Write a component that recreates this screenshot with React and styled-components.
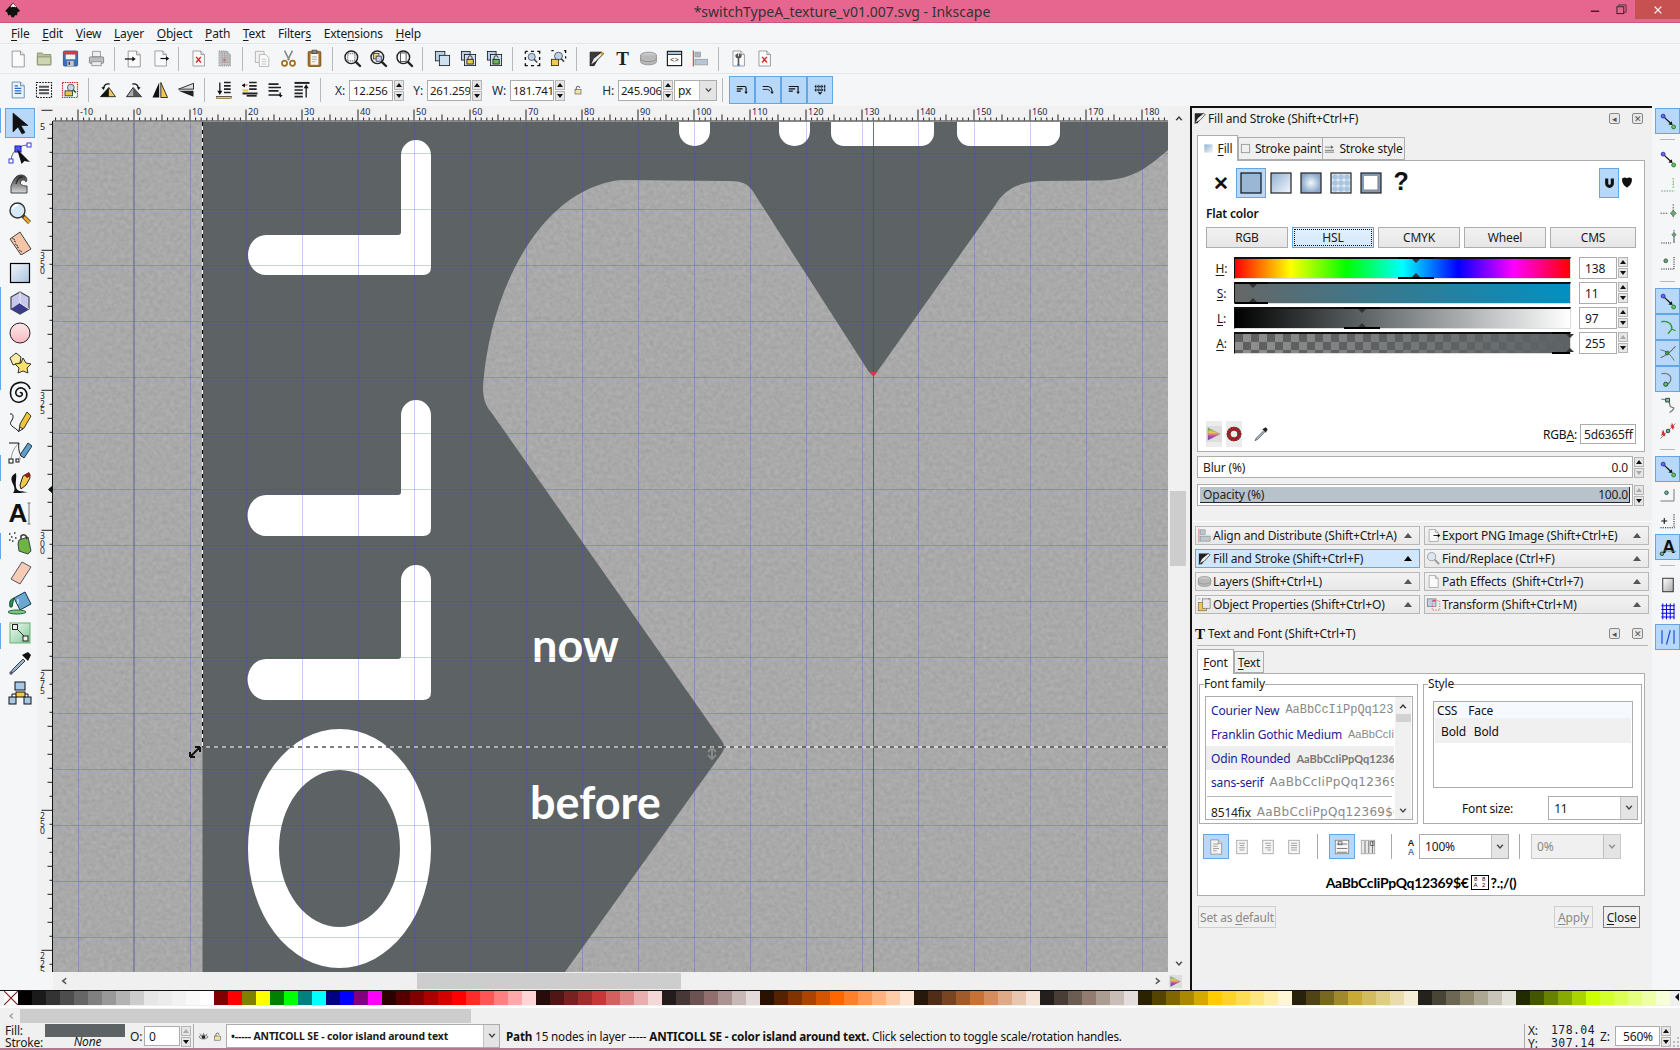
import React from "react";
import styled, { createGlobalStyle } from "styled-components";

const Global = createGlobalStyle`
  html, body { margin: 0; padding: 0; background: #f0f0f0; }
  body { font-family: "Noto Sans", "Open Sans", sans-serif; font-size: 12px; color: #111; letter-spacing: -0.17px; }
  * { box-sizing: border-box; }
  u { text-underline-offset: 2px; }
`;

const Page = styled.div`
  width: 1680px; height: 1050px; overflow: hidden; position: relative;
  display: flex; flex-direction: column; background: #f4f6f8;
`;
const Defs = styled.svg`position: absolute; width: 0; height: 0;`;
const IconSvg = styled.svg`
  width: ${p => p.$s}px; height: ${p => p.$s}px; flex: none; display: block;
  opacity: ${p => p.$dim ? 0.55 : 1}; letter-spacing: 0;
`;

/* ---------- title + menus ---------- */
const TitleBar = styled.header`
  height: 23px; flex: none; background: #e7668f; border-bottom: 1px solid #c9577e; position: relative;
  display: flex; align-items: center; justify-content: center;
  font-size: 14px; color: #333; padding-left: 4px; letter-spacing: 0;
`;
const AppLogo = styled.div`position: absolute; left: 4px; top: 2px;`;
const WinButtons = styled.div`position: absolute; right: 0; top: 0; display: flex; align-items: flex-start;`;
const WinBtn = styled.div`
  width: ${p => p.$w}px; height: 19px; display: flex; align-items: center; justify-content: center;
  background: ${p => p.$close ? "#c75050" : "transparent"};
`;
const MenuBar = styled.nav`
  height: 21px; flex: none; display: flex; gap: 12.7px; align-items: center; padding-left: 11px;
  border-bottom: 1px solid #e6e6e8; font-size: 12px; color: #1a1a1a;
`;
const Toolbar = styled.div`
  height: ${p => p.$h}px; flex: none; display: flex; align-items: center; padding-left: 5px;
  border-bottom: ${p => p.$line ? "1px solid #e6e6e8" : "none"};
`;
const Slot = styled.div`
  width: 26px; height: ${p => p.$on ? 28 : 26}px; flex: none; display: flex; align-items: center; justify-content: center;
  background: ${p => p.$on ? "#b7d8f8" : "transparent"};
  border: ${p => p.$on ? "1px solid #63a6e6" : "none"};
`;
const Sep = styled.div`
  width: 12px; height: 24px; flex: none; position: relative;
  &::after { content: ""; position: absolute; left: 5px; top: 0; bottom: 0; width: 1px; background: #b9b9b9; }
`;
const FieldLabel = styled.span`
  color: #1c2c44; font-size: 12px; width: ${p => p.$w}px; flex: none; text-align: right; padding-right: 4px;
`;
const Entry = styled.div`
  width: ${p => p.$w}px; height: ${p => p.$h || 21}px; flex: none; background: #fff;
  border: 1px solid ${p => p.$dim ? "#ccc" : "#acacac"}; display: flex; align-items: center; padding-left: ${p => p.$pl ?? 3}px;
  font-size: ${p => p.$fs || 12}px; color: ${p => p.$dim ? "#888" : "#1a1a1a"}; white-space: nowrap; overflow: hidden;
  justify-content: ${p => p.$end ? "flex-end" : "flex-start"};
`;
const SpinBox = styled.div`
  width: 10px; flex: none; margin-left: 1px; display: flex; flex-direction: column; gap: 1px;
`;
const SpinBtn = styled.div`
  height: 10px; background: #e6e6e6; border: 1px solid #b4b4b4; display: flex; align-items: center; justify-content: center;
  &::after {
    content: ""; border-left: 3px solid transparent; border-right: 3px solid transparent;
    ${p => p.$down ? "border-top" : "border-bottom"}: 4px solid ${p => p.$dim ? "#aaa" : "#111"};
  }
`;
const Combo = styled.div`
  width: ${p => p.$w}px; height: ${p => p.$h || 21}px; flex: none; display: flex; background: ${p => p.$dim ? "#f0f0f0" : "#fff"};
  border: 1px solid ${p => p.$dim ? "#c8c8c8" : "#acacac"}; font-size: 12px; color: ${p => p.$dim ? "#888" : "#1a1a1a"};
  margin-left: ${p => p.$ml || 0}px;
`;
const ComboText = styled.div`
  flex: 1; display: flex; align-items: center; padding-left: ${p => p.$pl ?? 4}px; white-space: nowrap; overflow: hidden;
`;
const ComboArrow = styled.div`
  width: ${p => p.$w || 17}px; flex: none; display: flex; align-items: center; justify-content: center;
  background: #e4e4e4; border-left: 1px solid #c0c0c0;
`;

/* ---------- workspace ---------- */
const Main = styled.main`flex: 1; min-height: 0; display: flex;`;
const Toolbox = styled.aside`
  width: 37px; flex: none; padding: 2px 0 0 5px; position: relative; display: flex; flex-direction: column;
`;
const Mark = styled.i`
  position: absolute; left: 0; width: 1px; top: ${p => p.$t}px; height: ${p => p.$h}px; background: #62a8e8;
`;
const ToolSlot = styled.div`
  width: 30px; height: 30px; flex: none; display: flex; align-items: center; justify-content: center;
  background: ${p => p.$on ? "#b7d8f8" : "transparent"}; border: ${p => p.$on ? "1px solid #63a6e6" : "none"};
`;
const Work = styled.section`
  width: 1153px; flex: none; display: grid; grid-template-columns: 16px 1115px 22px; grid-template-rows: 16px 850px 18px;
  background: #f0f0f0;
`;
const RulerCell = styled.div`grid-column: 1; grid-row: 1 / 3;`;
const CanvasCell = styled.div`grid-column: 2; grid-row: 2;`;
const RulerH = styled.svg`display: block; background: #f1f1f1; letter-spacing: 0;`;
const CanvasSvg = styled.svg`display: block; letter-spacing: 0;`;
const VScroll = styled.div`
  grid-row: 1 / 3; grid-column: 3; background: #f0f0f0; display: flex; flex-direction: column; align-items: center; padding-top: 6px;
`;
const VThumb = styled.div`width: 16px; height: 75px; background: #cdcdcd; margin: 367px 2px 0 0;`;
const VEnd = styled.div`margin-top: auto; margin-bottom: 2px;`;
const HScroll = styled.div`
  grid-column: 2; display: flex; align-items: center; background: #f0f0f0; padding-left: 5px; position: relative;
`;
const HThumb = styled.div`width: 264px; height: 16px; background: #cdcdcd; margin-left: 347px;`;
const HEnd = styled.div`margin-left: auto; margin-right: 4px;`;
const CornerIcon = styled.div`display: flex; align-items: center; padding-left: 1px;`;
const CornerEmpty = styled.div`background: #f4f6f8;`;

/* ---------- dock panel ---------- */
const Dock = styled.section`
  width: 462px; flex: none; background: #f0f0f0; border-left: 2px solid #111; border-top: 2px solid #111;
  display: flex; flex-direction: column; padding-left: 5px;
`;
const PanelTitle = styled.div`
  height: ${p => p.$h}px; flex: none; display: flex; align-items: center; margin-left: -4px; padding-right: 9px;
  gap: 1px; font-size: 12px; color: #1a1a1a; margin-top: ${p => p.$mt || 0}px;
`;
const PanelName = styled.span`flex: 1; white-space: nowrap;`;
const MiniBtn = styled.div`
  width: 11px; height: 11px; margin-left: 11px; border: 1px solid #888; border-radius: 2px; background: #e8e8e8;
  display: flex; align-items: center; justify-content: center; font-size: 9px; line-height: 1; color: #555;
`;
const TabRow = styled.div`display: flex; align-items: flex-end; flex: none; height: ${p => p.$h}px; margin-top: ${p => p.$mt || 0}px; position: relative; z-index: 1;`;
const Tab = styled.div`
  width: ${p => p.$w}px; height: ${p => p.$on ? p.$h + 1 : p.$h - 2}px; display: flex; align-items: center; justify-content: center; gap: 4px;
  background: ${p => p.$on ? "#fff" : "#f0f0f0"}; border: 1px solid #adadad; white-space: nowrap; flex: none;
  border-bottom: ${p => p.$on ? "none" : "1px solid #adadad"}; margin-bottom: ${p => p.$on ? -1 : 0}px;
  margin-right: ${p => p.$on ? 0 : -1}px; font-size: 12px; color: #1a1a1a;
`;
const Note = styled.div`
  width: 448px; height: ${p => p.$h}px; flex: none; background: #fff; border: 1px solid #adadad; display: flex; flex-direction: column;
  padding: ${p => p.$pad};
`;
const ModeRow = styled.div`height: 30px; flex: none; margin-top: 7px; display: flex; align-items: center;`;
const ModeBtn = styled.div`
  width: 30px; height: 30px; flex: none; display: flex; align-items: center; justify-content: center;
  background: ${p => p.$on ? "#b7d8f8" : "transparent"}; border: ${p => p.$on ? "1px solid #63a6e6" : "none"};
`;
const Cross = styled.b`font-size: 19px; line-height: 1; font-family: "Liberation Sans", sans-serif; color: #111;`;
const Query = styled.b`font-size: 25px; line-height: 1; font-family: "Liberation Sans", sans-serif; color: #111; margin-top: -4px;`;
const MagnetWrap = styled.div`margin-left: auto; margin-right: 2px; display: flex; align-items: center; gap: 1px;`;
const Magnet = styled.div`
  width: 20px; height: 30px; background: #b7d8f8; border: 1px solid #63a6e6; display: flex; align-items: center; justify-content: center;
`;
const FlatLabel = styled.div`font-weight: 600; font-size: 12px; height: 16px; line-height: 16px; margin-top: 8px; color: #111;`;
const ModeTabs = styled.div`display: flex; gap: 4px; margin-top: 5px; flex: none;`;
const ModeTab = styled.div`
  width: ${p => p.$w}px; height: 21px; display: flex; align-items: center; justify-content: center; font-size: 12px; color: #1a1a1a;
  background: ${p => p.$on ? "linear-gradient(#e4f1fd,#d3e8fb)" : "linear-gradient(#f2f2f2,#e6e6e6)"};
  border: 1px solid ${p => p.$on ? "#63a6e6" : "#adadad"};
  outline: ${p => p.$on ? "1px dotted #111" : "none"}; outline-offset: -3px;
`;
const Sliders = styled.div`display: flex; flex-direction: column; gap: 4px; margin-top: 9px;`;
const SliderRow = styled.div`display: grid; grid-template-columns: 28px 337px 38px 10px; height: 21px; align-items: stretch;`;
const SliderLabel = styled.div`display: flex; align-items: center; justify-content: center; font-size: 12px; padding-left: 3px; color: #1a1a1a;`;
const Track = styled.div`
  position: relative; width: 337px; border-top: 2px solid #111; border-left: 1px solid #111; background: ${p => p.$bg};
  border-bottom: 1px solid #ddd; border-right: 1px solid #ddd;
`;
const Thumb = styled.div`
  position: absolute; top: -2px; bottom: -1px; border-top: 2px solid #000; border-bottom: 2px solid #000;
  &::before, &::after { content: ""; position: absolute; left: 14px; border-left: 4px solid transparent; border-right: 4px solid transparent; }
  &::before { top: 0; border-top: 4px solid #333; }
  &::after { bottom: 0; border-bottom: 4px solid #333; }
`;
const SliderEntry = styled(Entry)`margin-left: 8px; height: 22px;`;
const SliderSpin = styled.div`display: flex; flex: 1; margin-left: 8px;`;
const ColorTools = styled.div`margin-top: auto; height: 26px; margin-bottom: 4px; display: flex; align-items: center; gap: 4px;`;
const ColorTool = styled.div`
  width: 16px; height: 26px; flex: none; background: ${p => p.$bg ? "#ececec" : "transparent"}; display: flex; align-items: center; justify-content: center;
  margin-left: ${p => p.$ml || 0}px;
`;
const Rgba = styled.div`margin-left: auto; margin-right: 0; display: flex; align-items: center; gap: 3px; font-size: 12px;`;
const ValueRow = styled.div`display: flex; margin-top: ${p => p.$mt}px; flex: none; width: 448px; align-items: center;`;
const ValueBox = styled.div`
  width: 436px; height: 22px; background: #fff; border: 1px solid #adadad; padding: ${p => p.$fill ? "2px 2px" : "0"}; display: flex; font-size: 12px;
`;
const ValueFill = styled.div`
  flex: 1; display: flex; justify-content: space-between; align-items: center; padding: 0 ${p => p.$fill ? 1 : 4}px 0 ${p => p.$fill ? 3 : 5}px;
  background: ${p => p.$fill ? "#b7c2cb" : "transparent"}; border-bottom: ${p => p.$fill ? "1px solid #223" : "none"};
  border-right: ${p => p.$fill ? "1px solid #223" : "none"}; color: #222;
`;
const DockRule = styled.div`height: 1px; background: #fff; margin: 15px 0 4px -4px; flex: none;`;
const DockGrid = styled.div`display: grid; grid-template-columns: 225px 225px; column-gap: 4px; row-gap: 4px; margin-left: -2px; flex: none;`;
const DockBtn = styled.div`
  height: 19px; display: flex; align-items: center; background: ${p => p.$on ? "#cfe6fc" : "linear-gradient(#f3f3f3,#e8e8e8)"};
  border: 1px solid ${p => p.$on ? "#63a6e6" : "#b8b8b8"}; font-size: 12px; color: #1a1a1a; padding-left: 1px; gap: 1px;
`;
const DockName = styled.span`flex: 1; white-space: pre; overflow: hidden;`;
const DockArrow = styled.div`
  width: 14px; height: 100%; flex: none; display: flex; align-items: center; justify-content: center; margin-right: 4px;
  &::after { content: ""; border-left: 4px solid transparent; border-right: 4px solid transparent; border-bottom: 5px solid ${p => p.$on ? "#000" : "#555"}; }
`;
const TitleRule = styled.div`height: 1px; background: #b5b5b5; flex: none; margin-right: 4px;`;
const FrameRow = styled.div`display: flex; gap: 5px; margin-top: 2px; margin-left: 1px;`;
const Frame = styled.fieldset`
  width: 219px; height: 148px; margin: 0; border: 1px solid #adadad; padding: 0; min-width: 0; position: relative;
`;
const Legend = styled.legend`padding: 0; margin-left: 4px; font-size: 12px; line-height: 16px; color: #1a1a1a;`;
const FontList = styled.div`
  position: absolute; left: 5px; top: 4px; width: 208px; height: 124px; border: 1px solid #adadad; display: flex; overflow: hidden; background: #fff;
`;
const FontRows = styled.div`width: 188px; flex: none; padding-top: 1px; overflow: hidden;`;
const FontRow = styled.div`
  height: 24px; display: flex; align-items: center; gap: 6px; padding-left: 5px; white-space: nowrap; overflow: hidden;
  background: ${p => p.$on ? "#efefef" : "#fff"}; margin-top: ${p => p.$mt || 0}px; font-size: 12px;
  color: ${p => p.$plain ? "#222" : "#1c1c96"};
`;
const Preview = styled.span`
  color: ${p => p.$c || "#888"}; font-family: ${p => p.$f}, sans-serif; font-weight: ${p => p.$b ? 700 : 400}; font-size: ${p => p.$s || 12}px;
  letter-spacing: ${p => p.$ls || 0}px;
`;
const FontRule = styled.div`height: 1px; background: #b8b8b8; margin: 2px 2px 0 1px;`;
const ListScroll = styled.div`
  width: 16px; flex: none; margin-left: 1px; background: #f0f0f0; display: flex; flex-direction: column; align-items: center;
`;
const ListChev = styled.div`height: 16px; display: flex; align-items: center; justify-content: center; margin-top: ${p => p.$auto ? "auto" : "1px"};`;
const ListThumb = styled.div`width: 15px; height: 8px; background: #d2d2d2;`;
const StyleTree = styled.div`
  position: absolute; left: 9px; top: 9px; width: 200px; height: 87px; border: 1px solid #adadad; background: #fff;
`;
const TreeHead = styled.div`
  height: 17px; background: #f6f9fd; display: flex; align-items: center; padding-left: 3px; gap: 11px; border-bottom: 1px solid #eef3fa; font-size: 12px;
`;
const TreeRow = styled.div`height: 24px; background: #f0f0f0; display: flex; align-items: center; gap: 8px; padding-left: 6px; margin: 0 1px; font-size: 12px;`;
const SizeRow = styled.div`position: absolute; left: 38px; top: 104px; display: flex; align-items: center; gap: 35px; font-size: 12px; white-space: nowrap;`;
const AlignRow = styled.div`display: flex; align-items: center; margin: 10px 0 0 5px; height: 25px;`;
const AlignBtn = styled.div`
  width: 26px; height: 25px; flex: none; display: flex; align-items: center; justify-content: center;
  background: ${p => p.$on ? "#b7d8f8" : "transparent"}; border: ${p => p.$on ? "1px solid #63a6e6" : "none"};
`;
const AlignSep = styled.div`
  width: 22px; height: 25px; flex: none; position: relative;
  &::after { content: ""; position: absolute; left: 10px; top: 0; bottom: 0; width: 1px; background: #aaa; }
`;
const AAWrap = styled.div`width: 16px; flex: none; display: flex; align-items: center; justify-content: center;`;
const SamplePreview = styled.div`
  margin-top: 13px; height: 20px; display: flex; align-items: center; justify-content: center; font-family: "Lato", sans-serif; font-weight: 700;
  font-size: 14px; letter-spacing: -0.35px; color: #000;
`;
const GlyphBox = styled.span`
  display: inline-grid; grid-template-columns: 1fr 1fr; width: 18px; height: 15px; border: 1px solid #000; margin: 0 2px; font-size: 6px; line-height: 6.5px;
  letter-spacing: 0; text-align: center; font-family: "Liberation Sans", sans-serif; font-weight: 400;
`;
const DialogButtons = styled.div`display: flex; margin: 10px 0 0 1px; width: 442px; align-items: center;`;
const DlgBtn = styled.div`
  width: ${p => p.$w}px; height: 22px; display: flex; align-items: center; justify-content: center; font-size: 12px;
  background: #f0f0f0; border: 1px solid ${p => p.$dark ? "#7e7e7e" : "#cfcfcf"}; color: ${p => p.$dark ? "#1a1a1a" : "#8a8a8a"};
  margin-left: ${p => p.$ml || 0}px;
`;
const DlgGap = styled.div`flex: 1;`;

/* ---------- snap bar ---------- */
const SnapBar = styled.aside`width: 28px; flex: none; padding: 2px 0 0 3px; display: flex; flex-direction: column;`;
const SnapSlot = styled.div`
  width: 25px; height: 26px; flex: none; display: flex; align-items: center; justify-content: center;
  background: ${p => p.$on ? "#b7d8f8" : "transparent"}; border: ${p => p.$on ? "1px solid #63a6e6" : "none"};
`;
const SnapSep = styled.div`
  height: 12px; flex: none; position: relative;
  &::after { content: ""; position: absolute; left: 5px; right: 5px; top: 5px; height: 1px; background: #b9b9b9; }
`;

/* ---------- bottom ---------- */
const PaletteRow = styled.div`
  height: 18px; flex: none; background: #f0f0f0; border-top: 1px solid #111; display: flex; align-items: flex-start; padding-left: 4px; position: relative;
  border-bottom: 2px solid #fff;
`;
const Swatch = styled.i`width: 14px; height: 14px; flex: none; display: block; background: ${p => p.$c};`;
const NoneSwatch = styled.svg`width: 14px; height: 14px; flex: none; display: block;`;
const PalArrow = styled.i`
  position: absolute; right: 1px; top: 2px; border-top: 4px solid transparent; border-bottom: 4px solid transparent; border-right: 4px solid #111;
`;
const PalScroll = styled.div`height: 16px; flex: none; background: #f0f0f0; display: flex; align-items: center; padding-left: 6px;`;
const PalThumb = styled.div`width: 451px; height: 14px; background: #cdcdcd; margin-left: 4px;`;
const Status = styled.footer`
  height: 24px; flex: none; background: #f0f0f0; display: flex; font-size: 12px; color: #1a1a1a; position: relative;
`;
const FillBlock = styled.div`width: 125px; flex: none; display: grid; grid-template-columns: 45px 80px; padding-left: 5px;`;
const FillLab = styled.div`font-size: 12px; line-height: 13px; height: 12px; margin-top: ${p => p.$mt || 0}px;`;
const FillChip = styled.div`width: 80px; height: 13px; background: #5d6365; margin-left: -5px;`;
const NoneText = styled.div`font-style: italic; text-align: center; height: 12px; line-height: 12px; margin: -1px 0 0 -5px; font-size: 12px;`;
const OBlock = styled.div`display: flex; align-items: center; padding-left: 5px; width: 69px; flex: none; border-right: 1px solid #aaa;`;
const OLabel = styled.span`width: 14px; flex: none;`;
const Eye = styled.div`width: 32px; flex: none; display: flex; align-items: center; justify-content: space-around; padding: 0 2px;`;
const LayerText = styled.span`font-weight: 700; font-size: 10.4px; letter-spacing: -0.1px; font-family: "Noto Sans", sans-serif;`;
const Msg = styled.div`
  flex: 1; font-size: 11.7px; display: flex; align-items: center; padding-left: 6px; white-space: pre; color: #111;
`;
const CoordBlock = styled.div`
  width: 71px; flex: none; border-left: 1px solid #aaa; padding-left: 3px; display: grid; grid-template-columns: 18px 1fr; font-size: 12px; line-height: 13px;
`;
const Mono = styled.span`font-family: "DejaVu Sans Mono", "Liberation Mono", monospace; font-size: 11.5px; letter-spacing: 0.4px; text-align: right; color: #1a2030;`;
const ZoomBlock = styled.div`width: 85px; flex: none; display: flex; align-items: center;`;
const ZLabel = styled.span`margin-left: 5px; width: 15px; flex: none;`;
const Grip = styled.svg`position: absolute; right: 1px; bottom: 1px;`;
const Taskbar = styled.div`height: 2px; flex: none; background: #b07a90;`;

/* ---------- icons ---------- */
const page = (extra, fill = "#fafafa", st = "#8a8a8a") => (
  <>
    <path d="M5 2.5h10l4.5 4.5v14.5H5z" fill={fill} stroke={st} />
    <path d="M15 2.5V7h4.5" fill="#e4e4e4" stroke={st} />
    {extra}
  </>
);
const mag = (inner) => (
  <>
    <circle cx="10.5" cy="10.5" r="8" fill="#eef4fa" stroke="#222" strokeWidth="1.8" />
    {inner}
    <path d="M16.5 16.5l5 5" stroke="#222" strokeWidth="3" strokeLinecap="round" />
  </>
);
const nodePair = <>
  <circle cx="5.5" cy="5.5" r="2.6" fill="#6a6aee" stroke="#1a1ab0" />
  <path d="M7.5 7.5l8 7.5" stroke="#111" strokeWidth="1.6" />
  <path d="M12.5 16.5l5.5 .8-1-5z" fill="#111" />
  <circle cx="19.5" cy="20" r="2.6" fill="#6fbf6f" stroke="#126b12" />
</>;
const I = {
  logo: <>
    <path d="M12 1L1.5 12l3 2 1 4 3-1 1.5 3 3 .5 1.5-3 3 0 .5-4 3.5-1.5z" fill="#111" />
    <path d="M12 2l-3.5 4.5 2 .5 1-1 1.5 1 1-1 1 1 1.5-.5z" fill="#fff" />
  </>,
  new: page(),
  open: <><path d="M3 5h6l2 2h9v13H3z" fill="#b8c29a" stroke="#7f8a62" /><path d="M3 10h17v10H3z" fill="#cdd4b2" stroke="#7f8a62" /></>,
  save: <><rect x="3" y="2.5" width="18" height="19" rx="1.5" fill="#3e6fb4" stroke="#234a80" /><rect x="3.5" y="3" width="17" height="4" fill="#dd3b3b" /><rect x="6" y="7" width="12" height="6" fill="#f2f2f2" /><rect x="8" y="15" width="8" height="6.5" fill="#c8c8c8" /><rect x="9.5" y="16" width="2" height="4" fill="#345" /></>,
  print: <><path d="M7 3h10v7H7z" fill="#f0f0f0" stroke="#888" /><rect x="3" y="10" width="18" height="8" rx="1" fill="#bdbdbd" stroke="#777" /><path d="M6 16h12v5H6z" fill="#ededed" stroke="#888" /></>,
  import: <>{page()}<path d="M1 12h11" stroke="#111" strokeWidth="1.5" /><path d="M10 9l4 3-4 3z" fill="#111" /></>,
  export: <>{page()}<path d="M12 12h9" stroke="#111" strokeWidth="1.5" /><path d="M19 9l4 3-4 3z" fill="#111" /></>,
  revert: page(<path d="M9 10l6 7M15 10l-6 7" stroke="#d22" strokeWidth="1.7" />),
  vacuum: <><path d="M5 2.5h10l4.5 4.5v14.5H5z" fill="#c9c9c9" stroke="#888" strokeDasharray="1.5 1" /><path d="M7 5h10M7 8h12M7 11h12M7 14h12M7 17h12M9 3v18M12 3v18M15 3v18M18 7v14" stroke="#7a7a7a" strokeWidth=".7" strokeDasharray="1 1" /><path d="M10 16l4-4M14 16l-4-4" stroke="#c55" strokeWidth="1" /></>,
  copy: <><path d="M3 3h11v14H3z" fill="#f1f1f1" stroke="#aaa" /><path d="M8 7h8l4 4v11H8z" fill="#fafafa" stroke="#aaa" /><path d="M11 13h6M11 16h6M11 19h6" stroke="#bbb" /></>,
  cut: <><path d="M7 2l6 12M17 2l-6 12" stroke="#888" strokeWidth="2" /><circle cx="7" cy="18" r="3.2" fill="#fff" stroke="#a36c1c" strokeWidth="2.2" /><circle cx="17" cy="18" r="3.2" fill="#fff" stroke="#a36c1c" strokeWidth="2.2" /></>,
  paste: <><rect x="4" y="3" width="16" height="19" rx="1.5" fill="#a86f22" stroke="#6d4610" /><path d="M7 6h10v14H7z" fill="#f5f5f5" /><rect x="9" y="1.5" width="6" height="4" fill="#888" stroke="#444" /><path d="M9 10h6M9 13h6M9 16h4" stroke="#999" /></>,
  zoomSel: mag(<rect x="6" y="6" width="9" height="9" fill="#fff" stroke="#333" strokeDasharray="1.5 1" />),
  zoomDraw: mag(<><rect x="5.5" y="5.5" width="7" height="7" fill="#f3d664" stroke="#333" /><rect x="9" y="9" width="6.5" height="6.5" fill="#c8d6ea" stroke="#333" /></>),
  zoomPage: mag(<rect x="7" y="5" width="7" height="11" fill="#fff" stroke="#333" />),
  dup: <><rect x="3" y="3" width="12" height="12" fill="#b9cfe6" stroke="#111" /><rect x="8" y="8" width="13" height="13" fill="#cfe0f1" stroke="#111" /></>,
  clone: <><rect x="3" y="3" width="11" height="11" fill="#b9cfe6" stroke="#111" /><rect x="7" y="7" width="14" height="14" fill="#cfe0f1" stroke="#111" /><rect x="10" y="13" width="8" height="6" fill="#f0c93a" stroke="#111" /><path d="M11.5 13v-2a2.5 2.5 0 0 1 5 0v2" fill="none" stroke="#111" /></>,
  unlink: <><rect x="3" y="3" width="11" height="11" fill="#b9cfe6" stroke="#111" /><rect x="7" y="7" width="14" height="14" fill="#cfe0f1" stroke="#111" /><rect x="10" y="13" width="8" height="6" fill="#67b657" stroke="#111" /><path d="M11.5 13v-2a2.5 2.5 0 0 1 5 0" fill="none" stroke="#111" /></>,
  group: <><path d="M3 3h3M10 3h4M18 3h3v3M21 10v4M21 18v3h-3M14 21h-4M6 21H3v-3M3 14v-4M3 6V3" stroke="#111" strokeWidth="1.8" fill="none" /><circle cx="11" cy="10" r="4.5" fill="#bcd2ea" stroke="#444" /><path d="M14 13l4 4" stroke="#444" strokeWidth="2" /></>,
  ungroup: <><circle cx="12" cy="9" r="5" fill="#bcd2ea" stroke="#444" /><rect x="3" y="13" width="9" height="8" fill="#f1c94b" stroke="#222" /><path d="M15 12l4 4" stroke="#444" strokeWidth="2" /><path d="M3 2h3M19 2h2v3M21 9v3" stroke="#111" strokeWidth="1.6" fill="none" /></>,
  fillStroke: <><path d="M4 21V4h14l-3 6-6 11z" fill="#3a3a3a" stroke="#111" /><path d="M4 21l4-9 10-8 3 2-10 10z" fill="#e9e9e9" stroke="#111" /><path d="M16 6l5-3-2 5z" fill="#e8a020" /></>,
  txt: <text x="12" y="20" textAnchor="middle" fontFamily="Liberation Serif" fontWeight="700" fontSize="24" fill="#222">T</text>,
  layers: <><ellipse cx="12" cy="8" rx="10" ry="4" fill="#c9c9c9" stroke="#888" /><path d="M2 8v8c0 2 4.5 4 10 4s10-2 10-4V8" fill="#b9b9b9" stroke="#888" /><path d="M2 12c0 2 4.5 4 10 4s10-2 10-4" fill="none" stroke="#888" /></>,
  xml: <><rect x="3" y="3" width="18" height="18" fill="#fff" stroke="#111" strokeWidth="1.4" /><rect x="3" y="3" width="18" height="4" fill="#aac3dd" stroke="#111" /><text x="12" y="17" textAnchor="middle" fontSize="9" fontFamily="Liberation Sans" fill="#111">&lt;&gt;</text></>,
  align: <><path d="M3 2v20" stroke="#d85050" strokeWidth="1.5" /><rect x="5" y="4" width="7" height="6" fill="#aab9c7" stroke="#999" /><rect x="5" y="13" width="16" height="7" fill="#b7c6d4" stroke="#999" /></>,
  prefs: <>{page()}<path d="M9 8a3 3 0 0 0 6 0l-1.5-1v3h-3V7zM12 11v10" stroke="#555" strokeWidth="2" fill="none" /><circle cx="12" cy="20" r="1.5" fill="#3a70c0" /></>,
  selAll: page(<path d="M8 10h8M8 13h8M8 16h8M8 7h4" stroke="#2a6bc5" strokeWidth="1.4" />, "#eef4fb", "#5a7ea8"),
  selLayers: <><rect x="3" y="3" width="18" height="18" fill="none" stroke="#111" strokeDasharray="2 1.4" strokeWidth="1.4" /><path d="M6 8h12M6 12h12M6 16h12" stroke="#555" strokeWidth="2.4" /></>,
  selInvert: <><rect x="3" y="3" width="18" height="18" fill="none" stroke="#c11" strokeDasharray="1.6 1.2" strokeWidth="1.4" /><rect x="6" y="13" width="9" height="6" fill="#eec34a" stroke="#333" /><circle cx="13" cy="9" r="4" fill="#c6d9ec" stroke="#444" /><path d="M16 12l3 3" stroke="#444" strokeWidth="2" /></>,
  rotL: <><path d="M3 20h18L13 9z" fill="#f0c95a" stroke="#111" /><path d="M3 20l10-11v11z" fill="#111" /><path d="M7 10a5 5 0 0 1 7-5" fill="none" stroke="#111" strokeWidth="1.5" /><path d="M4 9l4-1-1 4z" fill="#111" /></>,
  rotR: <><path d="M3 20h18L11 9z" fill="#aaa" stroke="#111" /><path d="M11 9l10 11H11z" fill="#555" /><path d="M10 5a5 5 0 0 1 7 5" fill="none" stroke="#111" strokeWidth="1.5" /><path d="M20 9l-4-1 1 4z" fill="#111" /></>,
  flipH: <><path d="M11 3v18H3z" fill="#111" /><path d="M13 3v18h8z" fill="#f0c95a" stroke="#111" /></>,
  flipV: <><path d="M3 11h18V4z" fill="#ddd" stroke="#111" /><path d="M3 13h18v7z" fill="#222" /></>,
  raiseTop: <><path d="M12 3h8M12 7h8M12 11h8M12 15h8" stroke="#222" strokeWidth="2" /><path d="M3 20h18" stroke="#222" strokeWidth="1" /><rect x="3" y="20" width="18" height="2.4" fill="#f0c95a" stroke="#222" strokeWidth=".5" /><path d="M7 3v12" stroke="#111" strokeWidth="1.5" /><path d="M4 13l3 5 3-5z" fill="#111" /></>,
  raise: <><path d="M11 3h9M11 7h9M11 11h9" stroke="#222" strokeWidth="2" /><rect x="3" y="15" width="18" height="2.4" fill="#222" /><rect x="3" y="11" width="7" height="3" fill="#f0c95a" /><path d="M3 6h6" stroke="#c11" strokeWidth="1" /><path d="M6 4L2 6.5 6 9z" fill="#111" /><path d="M8 19h12" stroke="#222" strokeWidth="2" /></>,
  lower: <><path d="M3 5h12M3 9h15M3 13h12M3 18h15" stroke="#222" strokeWidth="2" /><path d="M17 15v4" stroke="#111" strokeWidth="1.5" /><path d="M15 18l2.5 3 2.5-3z" fill="#111" /></>,
  lowerBot: <><path d="M3 3.5h18" stroke="#222" strokeWidth="2.4" /><path d="M3 8h10M3 12h10M3 16h10M3 20h10" stroke="#222" strokeWidth="2" /><path d="M17 21V8" stroke="#111" strokeWidth="1.5" /><path d="M14 10l3-5 3 5z" fill="#111" /></>,
  lock: <><rect x="6" y="11" width="12" height="9" fill="#f3e2a8" stroke="#333" /><path d="M8.5 11V8a3.5 3.5 0 0 1 7 0" fill="none" stroke="#333" strokeWidth="1.5" /></>,
  sw1: <><path d="M3 6h14q2 0 2 3v7" fill="none" stroke="#111" strokeWidth="2" /><path d="M3 10h10M3 14h7" stroke="#111" strokeWidth="2" /><path d="M16 15l3 4 3-4z" fill="#111" /></>,
  sw2: <><path d="M3 6h8q8 0 8 10" fill="none" stroke="#111" strokeWidth="1.8" /><path d="M3 11h8q3 0 4 3" fill="none" stroke="#111" strokeWidth="1.4" /><path d="M16 15l3 4 3-4z" fill="#111" /></>,
  sw3: <><path d="M3 6h16v10" fill="none" stroke="#111" strokeWidth="2" /><path d="M3 10h11M3 14h7" stroke="#111" strokeWidth="2" /><path d="M16 15l3 4 3-4z" fill="#111" /></>,
  sw4: <><path d="M3 6h18M3 12h18" stroke="#111" strokeWidth="2.4" strokeDasharray="2.5 1.5" /><path d="M5 3v6M10 3v6M15 3v6M20 3v6M5 9v6M10 9v6M15 9v6M20 9v6" stroke="#111" strokeWidth="1.2" /><path d="M8 16l4 4 4-4z" fill="#111" /></>,
  toolSel: <path d="M5 2v19l5-5 4 7 3-1.5-4-7h7z" fill="#111" stroke="#111" strokeWidth=".6" />,
  toolNode: <><path d="M3 20a15 15 0 0 1 8-13 12 12 0 0 1 9-3" fill="none" stroke="#666" /><rect x="1" y="18" width="4" height="4" fill="#fff" stroke="#3b3be0" /><rect x="7" y="5" width="6" height="6" fill="#5555ee" stroke="#1818c0" /><rect x="19" y="2" width="4" height="4" fill="#fff" stroke="#3b3be0" /><path d="M9 8l13 13-5.5-1-3 3z" fill="#111" /></>,
  toolTweak: <><path d="M3 15c2-5 4-11 10-11 5 0 7 4 5 7-1-2-3-3-5-1-2 3 1 5 6 5v7H3z" fill="url(#gGrey)" stroke="#444" /><path d="M8 13c1-4 3-7 6-7" fill="none" stroke="#111" /></>,
  toolZoom: <><circle cx="9.5" cy="9.5" r="7.5" fill="#d6e9f8" stroke="#333" strokeWidth="1.4" /><path d="M5 8a5 5 0 0 1 5-4" stroke="#fff" strokeWidth="2" fill="none" /><path d="M15 15l6.5 6.5" stroke="#333" strokeWidth="4" /><path d="M16 16l5.5 5.5" stroke="#f0a820" strokeWidth="2.6" /></>,
  toolMeasure: <><path d="M2 8L12 1l11 17-10 6z" fill="#f4c5a8" stroke="#444" /><path d="M4 7l3 2M6 10l2 1M7 13l3 2M9 16l2 1M11 19l3 2" stroke="#444" /></>,
  toolRect: <><rect x="2.5" y="2.5" width="19" height="19" fill="url(#gBlue)" stroke="#000" strokeWidth="1.2" /></>,
  toolBox: <><path d="M12 1l9 5v12l-9 5-9-5V6z" fill="#c8c8ec" stroke="#444" strokeWidth="1.2" /><path d="M12 12l9 6-9 5-9-5z" fill="#3b3b8c" /><path d="M12 1v11l9 6" fill="none" stroke="#eee" /></>,
  toolEllipse: <circle cx="12" cy="12" r="10" fill="url(#gPink)" stroke="#222" />,
  toolStar: <><path d="M8 2l5 4-1 6-7 2-3-7z" fill="#f9eca0" stroke="#333" /><path d="M15 7l3 5 5 1-4 4 1 5-5-2-5 2 1-5-4-4 6-1z" fill="#f7e06e" stroke="#333" /></>,
  toolSpiral: <path d="M12 12c1-1 3 0 2 2s-5 2-6-1 2-7 6-6 6 6 4 10-9 6-13 2S2 6 7 3s13-2 15 5" fill="none" stroke="#111" strokeWidth="1.6" />,
  toolPencil: <><path d="M2 3c3-1 4 3 2 6s-2 4 0 6 5 3 7 6" fill="none" stroke="#111" /><path d="M12 13L19 1l4 4-7 12-5 3z" fill="#f3c33a" stroke="#333" /><path d="M11 20l1-4 3 2z" fill="#fff" stroke="#333" /></>,
  toolPen: <><path d="M1 2h10c-1 5 0 10 3 14" fill="none" stroke="#111" /><path d="M3 18c1-6 2-10 8-16" fill="none" stroke="#111" opacity=".4" /><rect x="1" y="18" width="4" height="4" fill="#fff" stroke="#111" /><rect x="8" y="18" width="3" height="3" fill="#fff" stroke="#111" /><path d="M12 14l8-12 4 3-8 12z" fill="#5f9fc9" stroke="#234" /><path d="M11 15l2 3-2 3z" fill="#aaa" /></>,
  toolCallig: <><path d="M8 2C2 5 3 9 5 13s2 7 0 9h5c4 0 9-1 11 0-6-3-12 0-13-6-1-5 1-10 0-14z" fill="#111" /><path d="M12 14l3-9 6-3 1 5-4 7-5 4z" fill="#f3c94a" stroke="#222" /><path d="M16 4l5-3 2 4-4 2z" fill="#8a2020" /></>,
  toolText: <><text x="10" y="21" textAnchor="middle" fontFamily="Liberation Sans" fontWeight="700" fontSize="26" fill="#111">A</text><path d="M21 2v21M19.5 2h3M19.5 23h3" stroke="#555" strokeWidth=".8" /></>,
  toolSpray: <><path d="M1 3h2M6 2h2M3 6h2M1 9h2M7 7h2M4 10h2" stroke="#333" strokeWidth="1.5" strokeDasharray="1.5 1" /><path d="M11 9l9-3 3 14-3 3-9-3-1-7z" fill="#6fb43e" stroke="#345" /><path d="M13 8V5a3 3 0 0 1 5 0l1 3" fill="none" stroke="#333" strokeWidth="1.5" /></>,
  toolEraser: <><path d="M14 1l9 5-11 17-9-5z" fill="#f6ccb8" stroke="#555" /></>,
  toolBucket: <><path d="M6 7l11-6 6 12-11 6z" fill="#6ba7cf" stroke="#134" /><path d="M6 7c-4 1-5 4-4 9h2l1-5z" fill="#2f8f40" stroke="#154" /><ellipse cx="9" cy="21" rx="9" ry="2" fill="#7dc77d" stroke="#264" /><path d="M10 8v5" stroke="#fff" /></>,
  toolGradient: <><rect x="2" y="2" width="20" height="20" fill="url(#gGreen)" stroke="#6cb36c" /><path d="M7 6l11 11" stroke="#333" /><rect x="4.5" y="3.5" width="5" height="5" fill="#eee" stroke="#222" /><rect x="15" y="15" width="5" height="5" fill="#eee" stroke="#222" /></>,
  toolDrop: <><path d="M14 4l6-3 3 3-3 6z" fill="#111" /><path d="M15 8L5 18l-2 3 1 1 3-2 10-10z" fill="#9bb4c9" stroke="#345" /><circle cx="3" cy="22" r="1.7" fill="#557" /></>,
  toolConn: <><rect x="7" y="1" width="10" height="8" fill="#a9c8e8" stroke="#111" /><rect x="8" y="11" width="9" height="5" fill="#f1c94b" stroke="#111" /><rect x="1" y="16" width="7" height="7" fill="#a9c8e8" stroke="#111" /><rect x="16" y="16" width="7" height="7" fill="#a9c8e8" stroke="#111" /><path d="M8 13H4v3M17 13h3v3" fill="none" stroke="#111" /></>,
  snapMain: nodePair,
  snapLine: <><path d="M19 3v13M3 20h18" stroke="#6fa86f" strokeWidth="1.5" strokeDasharray="2 1.5" /></>,
  snapCenter: <><path d="M2 15h10M19 3v10M19 18v4" stroke="#555" strokeWidth="1.4" strokeDasharray="2 1.5" /><path d="M19 11l4 4-4 4-4-4z" fill="#6fa86f" stroke="#333" strokeWidth=".6" /></>,
  snapCorner: <><path d="M3 20h13M20 3v6" stroke="#111" strokeWidth="1.2" strokeDasharray="1.5 1.5" /><path d="M20 6l3 3-3 3-3-3z" fill="#6fa86f" stroke="#333" strokeWidth=".6" /><path d="M20 12v8" stroke="#111" /></>,
  snapMid: <><path d="M3 20h18M20 4v16" stroke="#111" strokeWidth="1.2" strokeDasharray="1.5 1.5" /><circle cx="9" cy="9" r="2.5" fill="#6fa86f" stroke="#333" /></>,
  snapCurve: <path d="M3 5c10-2 15 4 14 10l-5 6m6-6l4 2" fill="none" stroke="#2c9a2c" strokeWidth="1.8" />,
  snapCross: <><path d="M2 18C10 16 16 10 22 3" fill="none" stroke="#666" strokeWidth="1.4" /><path d="M2 8c6 0 14 6 18 14" fill="none" stroke="#666" strokeWidth="1.2" /><circle cx="11" cy="12" r="2.6" fill="#3da03d" stroke="#124" strokeWidth=".6" /></>,
  snapSmooth: <><path d="M3 5c9-2 15 3 12 10-1 3-4 4-7 6" fill="none" stroke="#777" strokeWidth="1.6" /><circle cx="9" cy="19" r="2.8" fill="#5bbf5b" stroke="#124" /></>,
  snapCusp: <><path d="M3 4l10 2 2 8 5 2c-1 3-4 5-6 6" fill="none" stroke="#777" strokeWidth="1.6" /><rect x="9" y="3" width="5" height="5" fill="#78c278" stroke="#124" /></>,
  snapMidLine: <><path d="M2 22L22 2" stroke="#666" /><path d="M4 13l3 6M8 18l-3-7M16 4l3 6M20 8l-3-6M6 14l-3 4M20 5l-3 3" stroke="#d22" strokeWidth="1.4" /><circle cx="12" cy="12" r="2.4" fill="#5bbf5b" stroke="#124" /></>,
  snapObjC: <><circle cx="10" cy="9" r="2.4" fill="#6fbf6f" stroke="#124" /><path d="M2 20h18V4" fill="none" stroke="#777" strokeWidth="1.3" /></>,
  snapRot: <><path d="M3 12h8M7 8v8" stroke="#111" strokeWidth="1.4" /><path d="M2 21h19M20 3v18" stroke="#111" strokeWidth="1.3" strokeDasharray="1.5 1.5" /></>,
  snapText: <><text x="13" y="20" textAnchor="middle" fontFamily="Liberation Sans" fontWeight="700" fontSize="24" fill="#111">A</text><path d="M2 22l5-5 16 1" stroke="#5a8a5a" fill="none" /><circle cx="4" cy="21" r="2.4" fill="#6fbf6f" stroke="#124" /></>,
  snapPage: <rect x="5" y="3" width="14" height="18" fill="url(#gSilver)" stroke="#222" strokeWidth="1.2" />,
  snapGrid: <path d="M3 5h18M3 10h18M3 15h18M3 20h18M5 2v21M10 2v21M15 2v21M20 2v21" stroke="#0b0be8" strokeWidth="1.4" />,
  snapGuide: <path d="M4 3v18M20 3v18M10 22L15 3" stroke="#1a4fe0" strokeWidth="1.6" />,
  magnet: <path d="M5 4v8a7 7 0 0 0 14 0V4h-5v8a2 2 0 0 1-4 0V4z" fill="#111" />,
  heart: <path d="M4 4c3-2 6-2 8 0 2-2 5-2 8 0 2 7-3 13-8 16C7 17 2 11 4 4z" fill="#111" />,
  modeFlat: <rect x="2" y="2" width="20" height="20" fill="#9ab7d6" stroke="#111" strokeWidth="1.2" />,
  modeLinear: <rect x="2" y="2" width="20" height="20" fill="url(#gModeLin)" stroke="#222" strokeWidth="1.2" />,
  modeRadial: <rect x="2" y="2" width="20" height="20" fill="url(#gModeRad)" stroke="#222" strokeWidth="1.2" />,
  modePattern: <><rect x="2" y="2" width="20" height="20" fill="#dfe9f3" stroke="#222" strokeWidth="1.2" />{[6, 12, 18].flatMap(x => [6, 12, 18].map(y => <circle key={x + "_" + y} cx={x} cy={y} r="2.8" fill="#a9c4e0" />))}</>,
  modeSwatch: <><rect x="2" y="2" width="20" height="20" fill="#7f9bb8" stroke="#222" strokeWidth="1.2" /><rect x="5" y="5" width="14" height="14" fill="#fff" /><path d="M19 5v14H5" fill="none" stroke="#888" strokeWidth="1.2" /></>,
  tabFill: <rect x="3" y="3" width="18" height="18" fill="url(#gModeLin)" />,
  tabStroke: <rect x="3" y="3" width="18" height="18" fill="none" stroke="#999" strokeWidth="2" />,
  tabStyle: <><path d="M2 16h20M2 20h20" stroke="#777" strokeWidth="2" /><path d="M2 9h14" stroke="#777" strokeWidth="2" /><path d="M15 5l6 4-6 4z" fill="#666" /></>,
  wheel: <><rect x="0" y="0" width="24" height="24" fill="#ddd" /><path d="M3 3l18 9-18 9z" fill="url(#gRainbow)" stroke="#666" strokeWidth=".5" /></>,
  ring: <><circle cx="12" cy="12" r="8" fill="none" stroke="#c0232a" strokeWidth="6" /><circle cx="12" cy="12" r="8" fill="none" stroke="#333" strokeWidth="6" strokeDasharray="1 2" /></>,
  dropper: <><path d="M14 5l5-3 3 3-3 5z" fill="#222" /><path d="M15 8L5 18l-2 4 4-2 10-10z" fill="#aab8c8" stroke="#445" /></>,
  alignL: <>{page(<path d="M8 8h8M8 11h6M8 14h8M8 17h5" stroke="#888" />, "#f4f4f4", "#888")}</>,
  alignC: <><rect x="5" y="3" width="14" height="18" fill="#f6f6f6" stroke="#999" /><path d="M8 7h8M9 10h6M8 13h8M9 16h6" stroke="#888" /></>,
  alignR: <><rect x="5" y="3" width="14" height="18" fill="#f6f6f6" stroke="#999" /><path d="M8 7h8M10 10h6M8 13h8M11 16h5" stroke="#888" /></>,
  alignJ: <><rect x="5" y="3" width="14" height="18" fill="#f6f6f6" stroke="#999" /><path d="M8 7h8M8 10h8M8 13h8M8 16h8" stroke="#888" /></>,
  textH: <><rect x="3" y="3" width="18" height="18" fill="#f6f6f6" stroke="#777" /><path d="M5 8h14M5 14h14M5 19h14" stroke="#555" /><rect x="7" y="5" width="5" height="4" fill="none" stroke="#555" /></>,
  textV: <><rect x="3" y="3" width="18" height="18" fill="#e8e8e8" stroke="#999" /><path d="M8 4v16M13 4v16M18 4v16" stroke="#555" /><rect x="15" y="5" width="5" height="5" fill="none" stroke="#555" /></>,
  aa: <><text x="12" y="11" textAnchor="middle" fontFamily="Liberation Sans" fontWeight="700" fontSize="12" fill="#222">A</text><text x="12" y="23" textAnchor="middle" fontFamily="Liberation Sans" fontWeight="700" fontSize="12" fill="#4a7fb5">A</text></>,
  panelFS: <><path d="M3 21V4h15l-4 6-6 11z" fill="#222" /><path d="M3 21l5-9 10-8 3 2-9 10z" fill="#eee" stroke="#111" /></>,
  panelT: <text x="12" y="21" textAnchor="middle" fontFamily="Liberation Serif" fontWeight="700" fontSize="26" fill="#111">T</text>,
  dAlign: <><path d="M3 1v22" stroke="#d06060" strokeWidth="1.3" /><rect x="5" y="3" width="8" height="7" fill="#bcc8d4" stroke="#888" /><rect x="5" y="13" width="16" height="8" fill="#bcc8d4" stroke="#888" /></>,
  dExport: <>{page()}<path d="M12 12h8" stroke="#111" strokeWidth="1.5" /><path d="M19 9l4 3-4 3z" fill="#111" /></>,
  dFind: <><circle cx="9" cy="9" r="6.5" fill="#dbe6f0" stroke="#999" strokeWidth="1.4" /><path d="M14 14l7 7" stroke="#999" strokeWidth="3" /></>,
  dObj: <><rect x="2" y="9" width="13" height="13" fill="#f0c94b" stroke="#666" /><rect x="9" y="3" width="12" height="15" fill="#e8e8e8" stroke="#666" /><path d="M2 3h3M18 3h3" stroke="#333" strokeDasharray="1 1" /></>,
  dTrans: <><rect x="2" y="3" width="14" height="12" fill="#bcd2e6" stroke="#666" /><path d="M10 6h12v15H10z" fill="none" stroke="#d22" strokeDasharray="2 2" /><path d="M12 4l3 2-3 2z" fill="#d22" /></>,
  eye: <><path d="M2 13c4-6 16-6 20 0-4 6-16 6-20 0z" fill="#ddd" stroke="#222" /><circle cx="12" cy="13" r="4" fill="#222" /><path d="M4 6l2 3M12 4v4M20 6l-2 3" stroke="#222" /></>,
  chevD: <path d="M5 8l7 8 7-8-3-1-4 5-4-5z" fill="#444" />,
  chevU: <path d="M5 16l7-8 7 8-3 1-4-5-4 5z" fill="#333" />,
  chevL: <path d="M16 5l-9 7 9 7 1-3-5-4 5-4z" fill="#555" />,
  chevR: <path d="M8 5l9 7-9 7-1-3 5-4-5-4z" fill="#555" />,
  winMin: <path d="M2 15h20" stroke="#222" strokeWidth="3.2" />,
  winMax: <><rect x="2" y="6" width="15" height="15" fill="none" stroke="#222" strokeWidth="2" /><path d="M6 5V2h16v16h-4" fill="none" stroke="#222" strokeWidth="1.6" /></>,
  winX: <path d="M4 4l16 16M20 4L4 20" stroke="#fff" strokeWidth="3" />,
};
const Ico = ({ n, s = 22, dim }) => <IconSvg viewBox="0 0 24 24" $s={s} $dim={dim}>{I[n]}</IconSvg>;
const Spin = ({ dimUp, dimDown }) => <SpinBox><SpinBtn $dim={dimUp} /><SpinBtn $down $dim={dimDown} /></SpinBox>;

/* ---------- data ---------- */
const SWATCHES = "000000,1a1a1a,333333,4d4d4d,666666,808080,999999,b3b3b3,cccccc,e6e6e6,ececec,f2f2f2,f9f9f9,ffffff,800000,ff0000,808000,ffff00,008000,00ff00,008080,00ffff,000080,0000ff,800080,ff00ff,2b0000,550000,800000,aa0000,d40000,ff0000,ff2a2a,ff5555,ff8080,ffaaaa,ffd5d5,280b0b,501616,782121,a02c2c,c83737,d35f5f,de8787,e9afaf,f4d7d7,241c1c,483737,6c5353,916f6f,ac9393,c8b7b7,e3dbdb,2b1100,552200,803300,aa4400,d45500,ff6600,ff7f2a,ff9955,ffb380,ffccaa,ffe6d5,28170b,502d16,784421,a05a2c,c87137,d38d5f,deaa87,e9c6af,f4e3d7,241f1c,483e37,6c5d53,917c6f,ac9d93,c8beb7,e3dedb,2b2200,554400,806600,aa8800,d4aa00,ffcc00,ffd42a,ffdd55,ffe680,ffeeaa,fff6d5,28220b,504416,786721,a0892c,c8ab37,d3bc5f,decd87,e9ddaf,f4eed7,24221c,484537,6c6753,918a6f,aca793,c8c4b7,e3e2db,222b00,445500,668000,88aa00,aad400,ccff00,d4ff2a,ddff55,e5ff80,eeffaa,f6ffd5".split(",");
const MENUS = [["F","ile"],["E","dit"],["V","iew"],["L","ayer"],["O","bject"],["P","ath"],["T","ext"],["Filter","s","",1],["Exte","n","sions",1],["H","elp"]];
const CMD = ["new","open","save","print",0,"import","export",0,"revert","vacuum",0,"copy","cut","paste",0,"zoomSel","zoomDraw","zoomPage",0,"dup","clone","unlink",0,"group","ungroup",0,"fillStroke","txt","layers","xml","align",0,"prefs","revert"];
const TOOLS = ["toolSel","toolNode","toolTweak","toolZoom","toolMeasure","toolRect","toolBox","toolEllipse","toolStar","toolSpiral","toolPencil","toolPen","toolCallig","toolText","toolSpray","toolEraser","toolBucket","toolGradient","toolDrop","toolConn"];
const SNAP = [["snapMain",1],0,["snapMain"],["snapLine"],["snapCenter"],["snapCorner"],["snapMid"],0,["snapMain",1],["snapCurve",1],["snapCross",1],["snapSmooth",1],["snapCusp"],["snapMidLine"],0,["snapMain",1],["snapObjC"],["snapRot"],["snapText",1],0,["snapPage"],["snapGrid"],["snapGuide",1]];
const SLIDERS = [
  { l: "H", v: "138", at: 163, w: 36, bg: "linear-gradient(to right,#f00,#ff0 16.6%,#0f0 33.3%,#0ff 50%,#00f 66.6%,#f0f 83.3%,#f00)" },
  { l: "S", v: "11", at: 0, w: 33, bg: "linear-gradient(to right,#666,#0091c2)" },
  { l: "L", v: "97", at: 109, w: 36, bg: "linear-gradient(to right,#000,#5d6365 38%,#fff)" },
  { l: "A", v: "255", at: 317, w: 18, bg: "linear-gradient(to right,rgba(93,99,101,0),#5d6365),conic-gradient(#909090 25%,#5f5f5f 0 50%,#909090 0 75%,#5f5f5f 0) 0 0/16px 16px", dim: 1 },
];
const DOCKS = [["dAlign","Align and Distribute (Shift+Ctrl+A)"],["dExport","Export PNG Image (Shift+Ctrl+E)"],["panelFS","Fill and Stroke (Shift+Ctrl+F)",1],["dFind","Find/Replace (Ctrl+F)"],["layers","Layers (Shift+Ctrl+L)"],["new","Path Effects  (Shift+Ctrl+7)"],["dObj","Object Properties (Shift+Ctrl+O)"],["dTrans","Transform (Shift+Ctrl+M)"]];

/* ---------- drawings ---------- */
const HRuler = () => {
  const t = [];
  for (let i = 0; i * 5.6 < 1115; i++) {
    const x = (i * 5.6) + (134 - 53) % 5.6;
    const k = Math.round((x + 53 - 134) / 5.6);
    const h = k % 10 === 0 ? 11 : k % 5 === 0 ? 6 : 3;
    t.push(<line key={i} x1={x} x2={x} y1={14.5 - h} y2={14.5} stroke="#222" />);
    if (k % 10 === 0) t.push(<text key={"t" + i} x={x + 2} y={9} fontSize="9" fontFamily="Noto Sans" fill="#1c2c4c">{k}</text>);
  }
  return (
    <RulerH width="1115" height="16" viewBox="0 0 1115 16">
      {t}
      <line x1="0" x2="1115" y1="15" y2="15" stroke="#222" />
    </RulerH>
  );
};
const VRuler = () => {
  const t = [];
  for (let y = 4.3, k = 0; y < 850 + 16; y += 14, k++) {
    const major = k % 10 === 0;
    const len = major ? 11 : k % 2 === 0 ? 5 : 3;
    t.push(<line key={k} x1={15.5 - len} x2={15.5} y1={y} y2={y} stroke="#222" />);
  }
  const labels = ["350", "325", "300", "275", "250", "225"];
  return (
    <RulerH width="16" height="866" viewBox="0 0 16 866">
      {t}
      <line x1="15.5" x2="15.5" y1="15" y2="866" stroke="#111" />
      <text x="5.5" y="24" fontSize="9" textAnchor="middle" fontFamily="Noto Sans" fill="#223">5</text>
      {labels.map((l, i) => l.split("").map((c, j) => (
        <text key={l + j} x="5.5" y={144.3 + i * 140 + 9 + j * 7.5} fontSize="8.5" textAnchor="middle" fontFamily="Noto Sans" fill="#223">{c}</text>
      )))}
      <path d="M11 383.5l4.5 -4 v8z" fill="#111" />
    </RulerH>
  );
};
const lShape = (top, b0, b1) => `M266 ${b0} H398 Q401 ${b0} 401 ${b0 - 3} V${top + 15} A15 15 0 0 1 431 ${top + 15} V${b1 - 8} Q431 ${b1} 423 ${b1} H266 A18 20 0 0 1 266 ${b0} Z`;
const CanvasArt = () => {
  const v = [], h = [];
  for (let i = 0; i < 21; i++) if (i !== 1) v.push(78.5 + i * 56);
  for (let i = 0; i < 16; i++) h.push(153.5 + i * 56);
  return (
    <CanvasSvg width="1115" height="850" viewBox="53 122 1115 850">
      <rect x="53" y="122" width="1115" height="850" fill="#a9a9a9" filter="url(#grain)" />
      <path d="M202.5 122H1168V150C1150 165 1135 180 1100 180.5L1040 181C1015 182 1003 193 996 204L877 372Q873 378 869 372L752 190C745 181 738 181 725 181L620 180C540 190 490 290 483 386C483 400 486 406 491 412L722 741Q726 747 722 753L565 972H202.5Z" fill="#5d6365" />
      <g fill="#fff">
        <rect x="679" y="90" width="31" height="56" rx="15" />
        <rect x="779" y="90" width="31" height="56" rx="15" />
        <rect x="831" y="90" width="103" height="56" rx="13" />
        <rect x="957" y="90" width="103" height="56" rx="13" />
        <path d={lShape(140, 235, 275)} />
        <path d={lShape(400, 495, 536)} />
        <path d={lShape(565, 659, 700)} />
        <path fillRule="evenodd" d="M248 848.5a91.5 119.5 0 1 0 183 0a91.5 119.5 0 1 0 -183 0ZM279 848.5a60.5 78.5 0 1 1 121 0a60.5 78.5 0 1 1 -121 0Z" />
      </g>
      <text x="532" y="662" fontFamily="Lato" fontWeight="700" fontSize="45" fill="#fff">now</text>
      <text x="530" y="819" fontFamily="Lato" fontWeight="700" fontSize="45" fill="#fff">before</text>
      <g stroke="#3a3ae6" strokeOpacity=".26">
        {v.map(x => <line key={x} x1={x} x2={x} y1="122" y2="972" />)}
        {h.map(y => <line key={y} x1="53" x2="1168" y1={y} y2={y} />)}
      </g>
      <line x1="134" x2="134" y1="122" y2="972" stroke="#5a6390" />
      <line x1="873.5" x2="873.5" y1="122" y2="972" stroke="#3c3ce0" strokeOpacity=".8" />
      <path d="M870 372l3.5 5 3.5-5z" fill="#e0305a" />
      <line x1="202.5" x2="202.5" y1="122" y2="747" stroke="#fff" />
      <line x1="202.5" x2="202.5" y1="122" y2="747" stroke="#000" strokeDasharray="4 4" />
      <line x1="202" x2="1168" y1="747" y2="747" stroke="#fff" />
      <line x1="202" x2="1168" y1="747" y2="747" stroke="#000" strokeDasharray="4 4" />
      <path d="M190 757l10-10M190 757v-5M190 757h5M200 747h-5M200 747v5" stroke="#111" strokeWidth="2" fill="none" />
      <path d="M712 748v11M708 752l4-4 4 4M708 755l4 4 4-4" stroke="#888" strokeWidth="2" fill="none" />
    </CanvasSvg>
  );
};

export default function App() {
  return (
    <Page>
      <Global />
      <Defs aria-hidden="true">
        <defs>
          <linearGradient id="gBlue" x1="0" y1="0" x2="1" y2="1"><stop offset="0" stopColor="#f2f6fb" /><stop offset="1" stopColor="#a9c3dd" /></linearGradient>
          <linearGradient id="gModeLin" x1="0" y1="0" x2="1" y2="1"><stop offset="0" stopColor="#8fb0d2" /><stop offset="1" stopColor="#f4f7fb" /></linearGradient>
          <radialGradient id="gModeRad"><stop offset="0" stopColor="#f4f7fb" /><stop offset="1" stopColor="#89a9cc" /></radialGradient>
          <linearGradient id="gGrey" x1="0" y1="0" x2="0" y2="1"><stop offset="0" stopColor="#333" /><stop offset="1" stopColor="#d8d8d8" /></linearGradient>
          <linearGradient id="gSilver" x1="0" y1="0" x2="1" y2="1"><stop offset="0" stopColor="#fff" /><stop offset="1" stopColor="#aaa" /></linearGradient>
          <linearGradient id="gPink" x1="0" y1="0" x2="0" y2="1"><stop offset="0" stopColor="#fbe8ea" /><stop offset="1" stopColor="#f9b8c2" /></linearGradient>
          <linearGradient id="gGreen" x1="0" y1="0" x2="1" y2="1"><stop offset="0" stopColor="#f2faf2" /><stop offset="1" stopColor="#7fc99a" /></linearGradient>
          <linearGradient id="gRainbow" x1="0" y1="0" x2="0" y2="1"><stop offset="0" stopColor="#3fb04a" /><stop offset=".35" stopColor="#e8d050" /><stop offset=".7" stopColor="#c040b0" /><stop offset="1" stopColor="#4050d0" /></linearGradient>
          <filter id="grain" x="0" y="0" width="100%" height="100%" colorInterpolationFilters="sRGB">
            <feTurbulence type="fractalNoise" baseFrequency="0.24" numOctaves="2" seed="7" />
            <feColorMatrix type="matrix" values=".09 0 0 0 .618  .09 0 0 0 .618  .09 0 0 0 .618  0 0 0 0 1" />
          </filter>
        </defs>
      </Defs>

      <TitleBar>
        <AppLogo><Ico n="logo" s={18} /></AppLogo>
        *switchTypeA_texture_v01.007.svg - Inkscape
        <WinButtons>
          <WinBtn $w={26}><Ico n="winMin" s={10} /></WinBtn>
          <WinBtn $w={27}><Ico n="winMax" s={11} /></WinBtn>
          <WinBtn $w={45} $close><Ico n="winX" s={10} /></WinBtn>
        </WinButtons>
      </TitleBar>

      <MenuBar>
        {MENUS.map(([a, b, c, mid]) => (
          <span key={a + b}>
            {mid ? <>{a}<u>{b}</u>{c}</> : <><u>{a}</u>{b}</>}
          </span>
        ))}
      </MenuBar>

      <Toolbar $h={30} $line>
        {CMD.map((n, i) => n ? <Slot key={i}><Ico n={n} s={n === "new" || n === "import" ? 20 : 19} /></Slot> : <Sep key={i} />)}
      </Toolbar>

      <Toolbar $h={32}>
        <Slot><Ico n="selAll" s={20} /></Slot><Slot><Ico n="selLayers" s={20} /></Slot><Slot><Ico n="selInvert" s={20} /></Slot>
        <Sep />
        <Slot><Ico n="rotL" s={20} /></Slot><Slot><Ico n="rotR" s={20} /></Slot><Slot><Ico n="flipH" s={20} /></Slot><Slot><Ico n="flipV" s={20} /></Slot>
        <Sep />
        <Slot><Ico n="raiseTop" s={20} /></Slot><Slot><Ico n="raise" s={20} /></Slot><Slot><Ico n="lower" s={20} /></Slot><Slot><Ico n="lowerBot" s={20} /></Slot>
        <Sep />
        <FieldLabel $w={22}>X:</FieldLabel><Entry $w={44} $fs={11.4}>12.256</Entry><Spin />
        <FieldLabel $w={23}>Y:</FieldLabel><Entry $w={44} $fs={11.4} $pl={2}>261.259</Entry><Spin />
        <FieldLabel $w={28}>W:</FieldLabel><Entry $w={44} $fs={11.4} $pl={2}>181.741</Entry><Spin />
        <Slot><Ico n="lock" s={12} /></Slot>
        <FieldLabel $w={27}>H:</FieldLabel><Entry $w={44} $fs={11.4} $pl={2}>245.906</Entry><Spin />
        <Combo $w={43} $ml={1}><ComboText $pl={3}>px</ComboText><ComboArrow $w={17}><Ico n="chevD" s={11} /></ComboArrow></Combo>
        <Sep />
        <Slot $on><Ico n="sw1" s={14} /></Slot><Slot $on><Ico n="sw2" s={14} /></Slot><Slot $on><Ico n="sw3" s={14} /></Slot><Slot $on><Ico n="sw4" s={14} /></Slot>
      </Toolbar>

      <Main>
        <Toolbox>
          <Mark $t={2} $h={25} /><Mark $t={181} $h={103} /><Mark $t={349} $h={26} /><Mark $t={427} $h={26} /><Mark $t={517} $h={26} />
          {TOOLS.map((n, i) => <ToolSlot key={n} $on={i === 0}><Ico n={n} s={24} /></ToolSlot>)}
        </Toolbox>
        <Work>
          <RulerCell><VRuler /></RulerCell>
          <HRuler />
          <VScroll>
            <Ico n="chevU" s={12} />
            <VThumb />
            <VEnd><Ico n="chevD" s={12} /></VEnd>
          </VScroll>
          <CanvasCell><CanvasArt /></CanvasCell>
          <CornerEmpty />
          <HScroll>
            <Ico n="chevL" s={12} />
            <HThumb />
            <HEnd><Ico n="chevR" s={12} /></HEnd>
          </HScroll>
          <CornerIcon><Ico n="wheel" s={13} /></CornerIcon>
        </Work>

        <Dock>
          <PanelTitle $h={20}>
            <Ico n="panelFS" s={14} /><PanelName>Fill and Stroke (Shift+Ctrl+F)</PanelName>
            <MiniBtn>◂</MiniBtn><MiniBtn>✕</MiniBtn>
          </PanelTitle>
          <TabRow $h={32}>
            <Tab $w={41} $h={25} $on><Ico n="tabFill" s={11} /><span><u>F</u>ill</span></Tab>
            <Tab $w={85} $h={25}><Ico n="tabStroke" s={11} /><span>Stroke paint</span></Tab>
            <Tab $w={83} $h={25}><Ico n="tabStyle" s={11} /><span>Stroke style</span></Tab>
          </TabRow>
          <Note $h={292} $pad="0 8px 0 8px">
            <ModeRow>
              <ModeBtn><Cross>✕</Cross></ModeBtn>
              <ModeBtn $on><Ico n="modeFlat" s={24} /></ModeBtn>
              <ModeBtn><Ico n="modeLinear" s={24} /></ModeBtn>
              <ModeBtn><Ico n="modeRadial" s={24} /></ModeBtn>
              <ModeBtn><Ico n="modePattern" s={24} /></ModeBtn>
              <ModeBtn><Ico n="modeSwatch" s={24} /></ModeBtn>
              <ModeBtn><Query>?</Query></ModeBtn>
              <MagnetWrap><Magnet><Ico n="magnet" s={15} /></Magnet><Ico n="heart" s={14} /></MagnetWrap>
            </ModeRow>
            <FlatLabel>Flat color</FlatLabel>
            <ModeTabs>
              <ModeTab $w={82}>RGB</ModeTab><ModeTab $w={82} $on>HSL</ModeTab><ModeTab $w={82}>CMYK</ModeTab><ModeTab $w={82}>Wheel</ModeTab><ModeTab $w={86}>CMS</ModeTab>
            </ModeTabs>
            <Sliders>
              {SLIDERS.map(s => (
                <SliderRow key={s.l}>
                  <SliderLabel><u>{s.l}</u>:</SliderLabel>
                  <Track $bg={s.bg}><Thumb style={{ left: s.at, width: s.w }} /></Track>
                  <SliderEntry $w={38} $pl={5}>{s.v}</SliderEntry>
                  <SliderSpin><Spin dimUp={s.dim} /></SliderSpin>
                </SliderRow>
              ))}
            </Sliders>
            <ColorTools>
              <ColorTool $bg><Ico n="wheel" s={16} /></ColorTool>
              <ColorTool $bg><Ico n="ring" s={16} /></ColorTool>
              <ColorTool $ml={7}><Ico n="dropper" s={16} /></ColorTool>
              <Rgba><span>RGB<u>A</u>:</span><Entry $w={56} $h={20} $pl={3}>5d6365ff</Entry></Rgba>
            </ColorTools>
          </Note>

          <ValueRow $mt={4}>
            <ValueBox><ValueFill><span>Blur (%)</span><span>0.0</span></ValueFill></ValueBox>
            <Spin dimDown />
          </ValueRow>
          <ValueRow $mt={6}>
            <ValueBox $fill><ValueFill $fill><span>Opacity (%)</span><span>100.0</span></ValueFill></ValueBox>
            <Spin dimUp />
          </ValueRow>
          <DockRule />
          <DockGrid>
            {DOCKS.map(([ic, t, on]) => (
              <DockBtn key={t} $on={on}>
                <Ico n={ic} s={15} /><DockName>{t}</DockName><DockArrow $on={on} />
              </DockBtn>
            ))}
          </DockGrid>

          <PanelTitle $h={23} $mt={8}>
            <Ico n="panelT" s={14} /><PanelName>Text and Font (Shift+Ctrl+T)</PanelName>
            <MiniBtn>◂</MiniBtn><MiniBtn>✕</MiniBtn>
          </PanelTitle>
          <TitleRule />
          <TabRow $h={27}>
            <Tab $w={37} $h={24} $on><span><u>F</u>ont</span></Tab>
            <Tab $w={30} $h={24}><span><u>T</u>ext</span></Tab>
          </TabRow>
          <Note $h={223} $pad="0">
            <FrameRow>
              <Frame>
                <Legend>Font family</Legend>
                <FontList>
                  <FontRows>
                    <FontRow>Courier New <Preview $f={'"Liberation Mono"'} $s={12}>AaBbCcIiPpQq12369$€</Preview></FontRow>
                    <FontRow>Franklin Gothic Medium <Preview $f={'"Liberation Sans"'} $s={11}>AaBbCcIiPpQq12369$€</Preview></FontRow>
                    <FontRow $on>Odin Rounded <Preview $f={'"Lato"'} $b $s={11} $c="#777">AaBbCcIiPpQq12369$€</Preview></FontRow>
                    <FontRow>sans-serif <Preview $f={'"DejaVu Sans"'} $s={12} $ls={0.3}>AaBbCcIiPpQq12369$€</Preview></FontRow>
                    <FontRule />
                    <FontRow $plain $mt={3}>8514fix <Preview $f={'"DejaVu Sans"'} $s={12} $ls={0.3}>AaBbCcIiPpQq12369$€</Preview></FontRow>
                  </FontRows>
                  <ListScroll>
                    <ListChev><Ico n="chevU" s={12} /></ListChev>
                    <ListThumb />
                    <ListChev $auto><Ico n="chevD" s={12} /></ListChev>
                  </ListScroll>
                </FontList>
              </Frame>
              <Frame>
                <Legend>Style</Legend>
                <StyleTree>
                  <TreeHead><span>CSS</span><span>Face</span></TreeHead>
                  <TreeRow><span>Bold</span><span>Bold</span></TreeRow>
                </StyleTree>
                <SizeRow>
                  <span>Font size:</span>
                  <Combo $w={90} $h={24}><ComboText $pl={5}>11</ComboText><ComboArrow $w={17}><Ico n="chevD" s={12} /></ComboArrow></Combo>
                </SizeRow>
              </Frame>
            </FrameRow>
            <AlignRow>
              <AlignBtn $on><Ico n="alignL" s={18} /></AlignBtn><AlignBtn><Ico n="alignC" s={18} /></AlignBtn><AlignBtn><Ico n="alignR" s={18} /></AlignBtn><AlignBtn><Ico n="alignJ" s={18} /></AlignBtn>
              <AlignSep />
              <AlignBtn $on><Ico n="textH" s={18} /></AlignBtn><AlignBtn><Ico n="textV" s={18} /></AlignBtn>
              <AlignSep />
              <AAWrap><Ico n="aa" s={18} /></AAWrap>
              <Combo $w={90} $h={25}><ComboText $pl={5}>100%</ComboText><ComboArrow $w={17}><Ico n="chevD" s={12} /></ComboArrow></Combo>
              <AlignSep />
              <Combo $w={90} $h={25} $dim><ComboText $pl={5}>0%</ComboText><ComboArrow $w={17}><Ico n="chevD" s={12} dim /></ComboArrow></Combo>
            </AlignRow>
            <SamplePreview>
              <span>AaBbCcIiPpQq12369$€</span><GlyphBox><span>8</span><span>8</span><span>A</span><span>2</span></GlyphBox><span>?.;/()</span>
            </SamplePreview>
          </Note>
          <DialogButtons>
            <DlgBtn $w={78}><span>Set as <u>d</u>efault</span></DlgBtn>
            <DlgGap />
            <DlgBtn $w={39}><span><u>A</u>pply</span></DlgBtn>
            <DlgBtn $w={37} $ml={10} $dark><span><u>C</u>lose</span></DlgBtn>
          </DialogButtons>
        </Dock>

        <SnapBar>
          {SNAP.map((s, i) => s ? <SnapSlot key={i} $on={s[1]}><Ico n={s[0]} s={18} /></SnapSlot> : <SnapSep key={i} />)}
        </SnapBar>
      </Main>

      <PaletteRow>
        <NoneSwatch viewBox="0 0 14 14"><rect width="14" height="14" fill="#fff" /><path d="M0 0l14 14M14 0L0 14" stroke="#7a2020" strokeWidth="1.2" /></NoneSwatch>
        {SWATCHES.map((c, i) => <Swatch key={i} $c={"#" + c} />)}
        <PalArrow />
      </PaletteRow>
      <PalScroll>
        <Ico n="chevL" s={10} dim />
        <PalThumb />
      </PalScroll>
      <Status>
        <FillBlock>
          <FillLab>Fill:</FillLab><FillChip />
          <FillLab $mt={-1}>Stroke:</FillLab><NoneText>None</NoneText>
        </FillBlock>
        <OBlock>
          <OLabel>O:</OLabel>
          <Entry $w={36} $h={20} $pl={4}>0</Entry><Spin dimUp />
        </OBlock>
        <Eye><Ico n="eye" s={11} /><Ico n="lock" s={11} /></Eye>
        <Combo $w={274} $h={24}><ComboText $pl={4}><LayerText>•----- ANTICOLL SE - color island around text</LayerText></ComboText><ComboArrow $w={16}><Ico n="chevD" s={12} /></ComboArrow></Combo>
        <Msg><b>Path</b> 15 nodes in layer ----- <b>ANTICOLL SE - color island around text.</b> Click selection to toggle scale/rotation handles.</Msg>
        <CoordBlock>
          <span>X:</span><Mono>178.04</Mono>
          <span><u>Y</u>:</span><Mono>307.14</Mono>
        </CoordBlock>
        <ZoomBlock>
          <ZLabel>Z:</ZLabel>
          <Entry $w={45} $h={20} $pl={7}>560%</Entry><Spin />
        </ZoomBlock>
        <Grip width="12" height="12" viewBox="0 0 12 12"><path d="M10 2h2v2h-2zM6 6h2v2H6zM10 6h2v2h-2zM2 10h2v2H2zM6 10h2v2H6zM10 10h2v2h-2z" fill="#bbb" /></Grip>
      </Status>
      <Taskbar />
    </Page>
  );
}
